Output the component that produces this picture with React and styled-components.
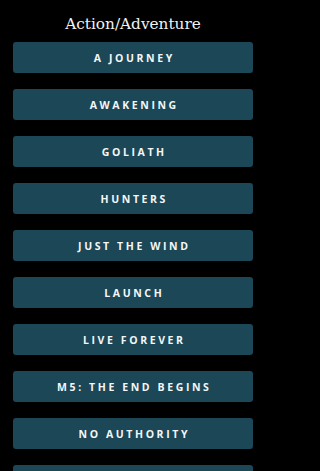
import styled, { createGlobalStyle } from 'styled-components';

const GlobalStyle = createGlobalStyle`
  html, body {
    margin: 0;
    padding: 0;
    background: #000;
  }
`;

const titles = [
  'A Journey',
  'Awakening',
  'Goliath',
  'Hunters',
  'Just the Wind',
  'Launch',
  'Live Forever',
  'M5: The End Begins',
  'No Authority',
  'Outbreak',
];

const Page = styled.div`
  width: 265px;
  height: 471px;
  overflow: hidden;
  background: #000;
  display: flex;
  flex-direction: column;
  padding: 0 12px 0 13px;
  box-sizing: border-box;
`;

const Heading = styled.h1`
  margin: 0;
  padding-top: 14px;
  height: 42px;
  text-align: center;
  font-family: "DejaVu Serif", "Liberation Serif", serif;
  font-weight: 400;
  font-size: 15.3px;
  line-height: 20px;
  color: #f2f2f2;
  box-sizing: border-box;
  flex-shrink: 0;
`;

const List = styled.div`
  display: flex;
  flex-direction: column;
  gap: 16px;
`;

const Track = styled.button`
  height: 31px;
  flex-shrink: 0;
  border: none;
  border-radius: 3px;
  background: #1b4757;
  color: #f4f6f7;
  font-family: "Open Sans", "Liberation Sans", sans-serif;
  font-weight: 700;
  font-size: 10.5px;
  letter-spacing: 2.6px;
  text-transform: uppercase;
  padding: 0 0 0 2.6px;
  display: flex;
  align-items: center;
  justify-content: center;
  cursor: pointer;
`;

export default function App() {
  return (
    <>
      <GlobalStyle />
      <Page>
        <Heading>Action/Adventure</Heading>
        <List>
          {titles.map((t) => (
            <Track key={t}>{t}</Track>
          ))}
        </List>
      </Page>
    </>
  );
}
